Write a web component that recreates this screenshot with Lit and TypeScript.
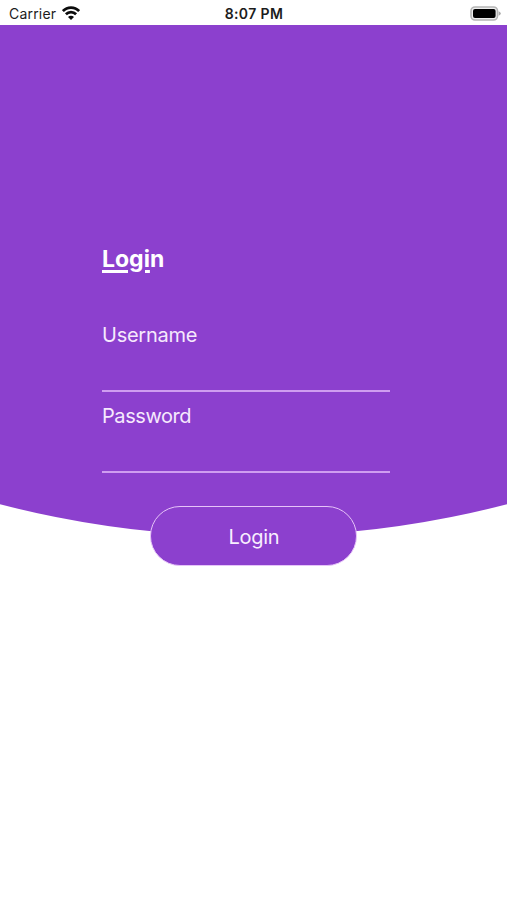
import { LitElement, html, css } from "lit";
import { customElement } from "lit/decorators.js";

@customElement("status-bar")
class StatusBar extends LitElement {
  static styles = css`
    :host {
      display: grid;
      grid-template-columns: 1fr auto 1fr;
      align-items: center;
      height: 25px;
      box-sizing: border-box;
      padding: 2px 6px 0 9px;
      background: #fff;
      color: #1c1c1c;
      font-size: 14px;
      line-height: 20px;
    }
    .carrier { display: flex; align-items: center; gap: 6px; }
    .name { letter-spacing: 0.2px; }
    .wifi { width: 18px; height: 14px; margin-top: -2px; }
    .time { font-weight: 600; letter-spacing: 0.4px; margin-right: 2px; }
    .battery { justify-self: end; width: 31px; height: 15px; margin-top: -1px; }
  `;
  render() {
    return html`
      <div class="carrier">
        <span class="name">Carrier</span>
        <svg class="wifi" viewBox="0 0 18 14">
          <g fill="none" stroke="#0c0c0c" stroke-width="2.7">
            <path d="M0.9 5.1C5.3 0.4 12.7 0.4 17.1 5.1" />
            <path d="M3.9 8.3C6.7 5.4 11.3 5.4 14.1 8.3" />
          </g>
          <path fill="#0c0c0c" d="M9 14L6 11C7.6 9.4 10.4 9.4 12 11Z" />
        </svg>
      </div>
      <div class="time">8:07 PM</div>
      <svg class="battery" viewBox="0 0 31 15">
        <rect x="1" y="1" width="26.5" height="13" rx="4" fill="#eee" stroke="#b5b5b5" stroke-width="1.6" />
        <rect x="3" y="3" width="22.6" height="9" rx="2" fill="#000" />
        <path d="M28.6 5.2Q30.8 6 30.8 7.5T28.6 9.8Z" fill="#aaa" />
      </svg>
    `;
  }
}

@customElement("line-field")
class LineField extends LitElement {
  static properties = { label: { type: String } };
  declare label: string;
  static styles = css`
    :host {
      display: block;
      height: 80.5px;
      box-sizing: border-box;
      color: #f6e9fd;
    }
    .label {
      display: block;
      font-size: 20px;
      line-height: 26px;
      letter-spacing: var(--label-tracking, 0);
    }
    .input {
      display: block;
      width: 100%;
      height: 44px;
      box-sizing: border-box;
      padding: 0;
      border: 0;
      border-bottom: 2px solid #cf9df0;
      border-radius: 0;
      outline: 0;
      background: transparent;
      color: inherit;
      font: inherit;
    }
  `;
  render() {
    return html`<label><span class="label">${this.label}</span><input class="input" /></label>`;
  }
}

@customElement("app-root")
class AppRoot extends LitElement {
  static styles = css`
    :host {
      display: block;
      height: 900px;
      overflow: hidden;
      background: #fff;
      font-family: Inter, "Liberation Sans", sans-serif;
    }
    .hero {
      height: 512px;
      box-sizing: border-box;
      padding: 219.5px 117px 0 102px;
      background: #8c40ce;
      clip-path: circle(1014px at 50% -502.5px);
    }
    .title {
      margin: 0 0 49.5px;
      color: #fff;
      font-size: 23px;
      font-weight: 700;
      line-height: 28px;
    }
    .underlined {
      text-decoration: underline;
      text-decoration-thickness: 3px;
      text-underline-offset: 2.5px;
    }
    .username { --label-tracking: -0.25px; }
    .password { --label-tracking: -0.42px; }
    .button {
      display: block;
      position: relative;
      width: 207px;
      height: 60px;
      margin: -31px 0 0 150.4px;
      padding: 1px 0 0;
      border: 1px solid #e6c4f8;
      border-radius: 30px;
      background: #8c40ce;
      color: #f8eefe;
      font: 20px Inter, "Liberation Sans", sans-serif;
      letter-spacing: -0.25px;
    }
  `;
  render() {
    return html`
      <status-bar></status-bar>
      <main>
        <section class="hero">
          <h1 class="title"><span class="underlined">Logi</span>n</h1>
          <line-field class="username" label="Username"></line-field>
          <line-field class="password" label="Password"></line-field>
        </section>
        <button class="button">Login</button>
      </main>
    `;
  }
}
